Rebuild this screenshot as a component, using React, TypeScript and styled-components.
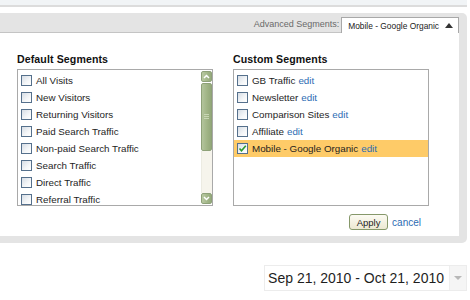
import React from "react";
import styled, { createGlobalStyle } from "styled-components";

const GlobalStyle = createGlobalStyle`
  html, body { margin: 0; padding: 0; background: #ffffff; }
  body { font-family: "Liberation Sans", Arial, sans-serif; color: #222; }
`;

const Page = styled.div`
  width: 470px;
  height: 300px;
  overflow: hidden;
`;

const TopStrip = styled.div`
  width: 467px;
  height: 5px;
  background: #f1f4f6;
  border-bottom: 2px solid #dcdcdc;
`;

const Panel = styled.div`
  width: 459px;
  margin-top: 6px;
  padding: 0 8px 7px 0;
  background: #e4e4e4;
  border-radius: 0 5px 5px 0;
`;

const PanelHeader = styled.div`
  height: 19px;
  display: flex;
  justify-content: flex-end;
  align-items: flex-end;
  border-bottom: 1px solid #c4c4c4;
`;

const SegLabel = styled.span`
  font-size: 9px;
  color: #6a6a6a;
  margin: 0 2px 3px 0;
  white-space: nowrap;
`;

const SegTab = styled.div`
  height: 15px;
  margin-bottom: -1px;
  padding: 0 5px 0 6px;
  display: flex;
  align-items: center;
  gap: 6px;
  flex: none;
  background: #fff;
  border: 1px solid #a8a8a8;
  border-bottom: none;
  font-size: 8.4px;
  color: #222;
  white-space: nowrap;
`;

const TabText = styled.span`
  flex: none;
`;

const Content = styled.div`
  height: 183px;
  padding: 20px 0 0 17px;
  background: #fff;
`;

const Columns = styled.div`
  display: grid;
  grid-template-columns: 196px 196px;
  column-gap: 20px;
`;

const Column = styled.div`
  display: flex;
  flex-direction: column;
`;

const Title = styled.div`
  font-size: 10.6px;
  line-height: 13px;
  font-weight: bold;
  color: #111;
  letter-spacing: 0.1px;
  margin-bottom: 3px;
`;

const ListBox = styled.div`
  height: 135px;
  border: 1px solid #a9a9a9;
  display: flex;
  overflow: hidden;
`;

const List = styled.div`
  flex: 1;
  padding-top: 2px;
  overflow: hidden;
`;

const Row = styled.div<{ $active?: boolean }>`
  height: 17px;
  display: flex;
  align-items: center;
  padding-left: 3px;
  gap: 4px;
  font-size: 9.8px;
  color: #1e1e1e;
  white-space: nowrap;
  background: ${(p) => (p.$active ? "#fecb68" : "transparent")};
`;

const Check = styled.span`
  width: 9px;
  height: 9px;
  flex: none;
  border: 1px solid #55708c;
  background: linear-gradient(135deg, #d6dde5 0%, #f4f6f8 60%, #ffffff 100%);
  display: flex;
  align-items: center;
  justify-content: center;
`;

const Edit = styled.span`
  color: #2d6cb3;
  margin-left: -1px;
`;

const Scrollbar = styled.div`
  width: 11px;
  display: flex;
  flex-direction: column;
  padding: 1px 0 1px 0;
`;

const ScrollBtn = styled.div`
  height: 11px;
  flex: none;
  background: linear-gradient(90deg, #b9c9a2, #a2b688 60%, #95aa7c);
  border: 1px solid #8ea178;
  border-radius: 2px;
  box-sizing: border-box;
  display: flex;
  align-items: center;
  justify-content: center;
`;

const Thumb = styled.div`
  height: 68px;
  flex: none;
  margin-top: 1px;
  background: linear-gradient(90deg, #b3c49c, #9fb384 60%, #93a87a);
  border: 1px solid #8ea178;
  border-radius: 2px;
  box-sizing: border-box;
  display: flex;
  align-items: center;
  justify-content: center;
`;

const Grip = styled.div`
  width: 5px;
  height: 6px;
  background: repeating-linear-gradient(
    180deg,
    #c8d6b4 0px,
    #c8d6b4 1px,
    transparent 1px,
    transparent 2px
  );
`;

const Track = styled.div`
  flex: 1;
  background: #f6f4ec;
  border-left: 1px solid #ecebe2;
`;

const Footer = styled.div`
  display: flex;
  justify-content: flex-end;
  align-items: center;
  gap: 4px;
  width: 408px;
  margin-top: 8px;
`;

const ApplyButton = styled.button`
  width: 39px;
  height: 16px;
  padding: 0;
  font-family: "Liberation Sans", Arial, sans-serif;
  font-size: 9.5px;
  color: #222;
  background: linear-gradient(180deg, #fcfbf3, #ece8d2);
  border: 1px solid #86986a;
  border-radius: 3px;
`;

const CancelLink = styled.span`
  font-size: 10px;
  color: #2d6cb3;
  margin-right: 4px;
`;

const DateRow = styled.div`
  display: flex;
  justify-content: flex-end;
  width: 467px;
  margin-top: 22px;
`;

const DateBox = styled.div`
  height: 24px;
  display: flex;
  align-items: stretch;
  border: 1px solid #ececec;
  background: #fff;
`;

const DateText = styled.span`
  display: flex;
  align-items: center;
  padding: 0 5px 0 3px;
  font-size: 14px;
  color: #1e1e1e;
`;

const DateArrow = styled.span`
  width: 16px;
  display: flex;
  align-items: center;
  justify-content: center;
  background: #f5f5f5;
  border-left: 1px solid #eeeeee;
`;

const DownTriangle = styled.span`
  width: 0;
  height: 0;
  border-left: 4px solid transparent;
  border-right: 4px solid transparent;
  border-top: 4px solid #b8b8b8;
`;

const UpTriangle = () => (
  <svg width="8" height="5" viewBox="0 0 8 5" style={{ display: "block", flex: "none" }}>
    <path d="M0 5 L4 0 L8 5 Z" fill="#333" />
  </svg>
);

const Chevron = ({ up }: { up?: boolean }) => (
  <svg width="7" height="5" viewBox="0 0 7 5">
    <path
      d={up ? "M1 4 L3.5 1.5 L6 4" : "M1 1 L3.5 3.5 L6 1"}
      stroke="#fff"
      strokeWidth="1.5"
      fill="none"
    />
  </svg>
);

const Tick = () => (
  <svg width="9" height="9" viewBox="0 0 9 9">
    <path d="M1.5 4.5 L3.5 6.8 L7.8 1.8" stroke="#2d9b2d" strokeWidth="1.6" fill="none" />
  </svg>
);

const defaults = [
  "All Visits",
  "New Visitors",
  "Returning Visitors",
  "Paid Search Traffic",
  "Non-paid Search Traffic",
  "Search Traffic",
  "Direct Traffic",
  "Referral Traffic",
];

const customs = [
  { name: "GB Traffic", checked: false },
  { name: "Newsletter", checked: false },
  { name: "Comparison Sites", checked: false },
  { name: "Affiliate", checked: false },
  { name: "Mobile - Google Organic", checked: true },
];

export default function App() {
  return (
    <Page>
      <GlobalStyle />
      <TopStrip />
      <Panel>
        <PanelHeader>
          <SegLabel>Advanced Segments:</SegLabel>
          <SegTab>
            <TabText>Mobile - Google Organic</TabText>
            <UpTriangle />
          </SegTab>
        </PanelHeader>
        <Content>
          <Columns>
            <Column>
              <Title>Default Segments</Title>
              <ListBox>
                <List>
                  {defaults.map((d) => (
                    <Row key={d}>
                      <Check />
                      {d}
                    </Row>
                  ))}
                </List>
                <Scrollbar>
                  <ScrollBtn>
                    <Chevron up />
                  </ScrollBtn>
                  <Thumb>
                    <Grip />
                  </Thumb>
                  <Track />
                  <ScrollBtn>
                    <Chevron />
                  </ScrollBtn>
                </Scrollbar>
              </ListBox>
            </Column>
            <Column>
              <Title>Custom Segments</Title>
              <ListBox>
                <List>
                  {customs.map((c) => (
                    <Row key={c.name} $active={c.checked}>
                      <Check>{c.checked && <Tick />}</Check>
                      {c.name}
                      <Edit>edit</Edit>
                    </Row>
                  ))}
                </List>
              </ListBox>
            </Column>
          </Columns>
          <Footer>
            <ApplyButton>Apply</ApplyButton>
            <CancelLink>cancel</CancelLink>
          </Footer>
        </Content>
      </Panel>
      <DateRow>
        <DateBox>
          <DateText>Sep 21, 2010 - Oct 21, 2010</DateText>
          <DateArrow>
            <DownTriangle />
          </DateArrow>
        </DateBox>
      </DateRow>
    </Page>
  );
}
